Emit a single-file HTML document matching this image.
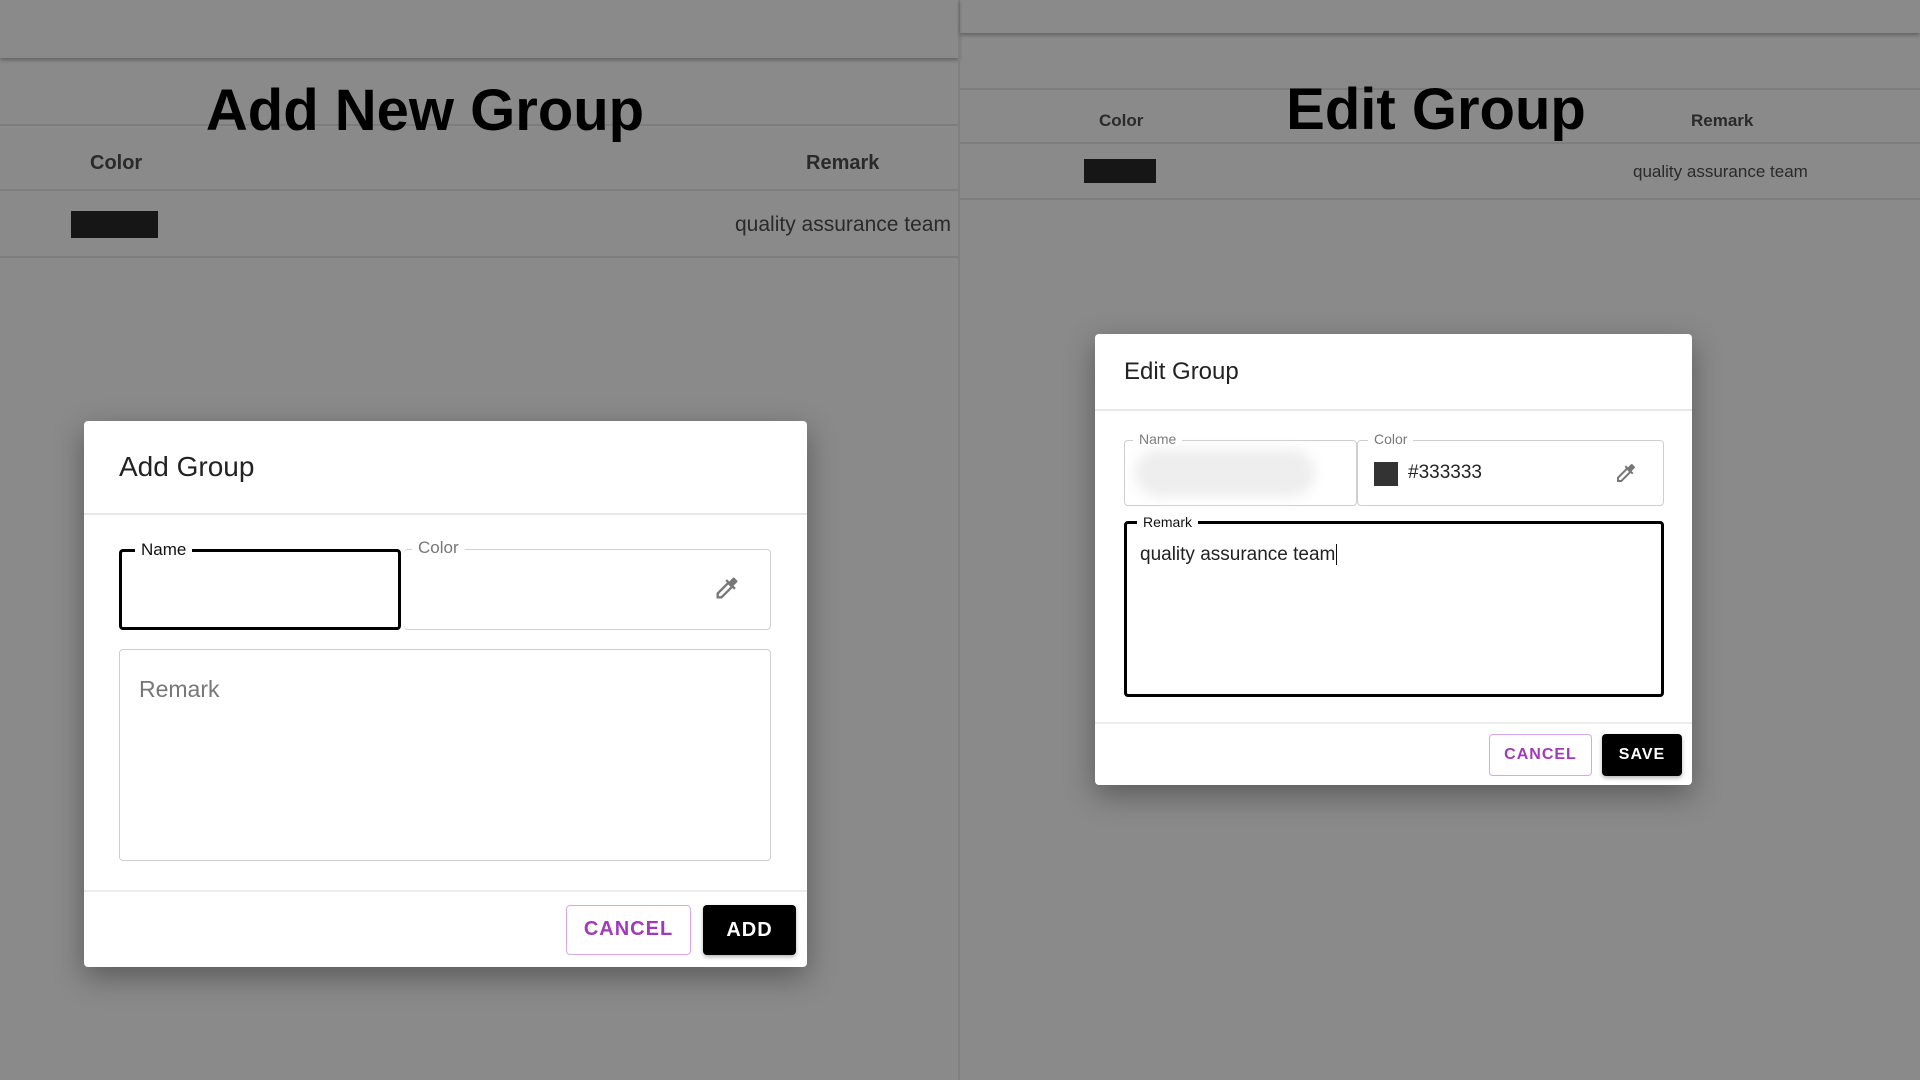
<!DOCTYPE html>
<html><head><meta charset="utf-8"><style>
*{box-sizing:border-box;margin:0;padding:0}
body{width:1920px;height:1080px;background:#8a8a8a;position:relative;overflow:hidden;font-family:"Liberation Sans",sans-serif;color:#1a1a1a}
.a{position:absolute}
.hl{position:absolute;height:2px;background:#7d7d7d}
.title{position:absolute;font-weight:bold;font-size:58px;color:#000;white-space:nowrap;transform:translateX(-50%)}
.dlg{position:absolute;background:#fff;border-radius:4px;box-shadow:0 10px 30px rgba(0,0,0,.35)}
.fld{position:absolute;border:1.5px solid #cfcfcf;border-radius:4px}
.fld.f{border:3px solid #000}
.lbl{position:absolute;background:#fff;padding:0 6px;color:#777;top:-11px;left:12px}
.btn{position:absolute;border-radius:4px;font-weight:bold;text-align:center;letter-spacing:1px}
.c{border:1.5px solid #d9a6e6;color:#a23ab8;background:#fff}
.k{background:#000;color:#fff;box-shadow:0 2px 4px rgba(0,0,0,.3)}
</style></head><body>
<!-- left panel -->
<div class="a" style="left:0;top:0;width:959px;height:58px;box-shadow:0 2px 4px rgba(0,0,0,.3)"></div>
<div class="hl" style="left:0;top:124px;width:959px"></div>
<div class="title" style="left:425px;top:77px">Add New Group</div>
<div class="a" style="left:90px;top:152px;font-size:20px;font-weight:bold;color:#2a2a2a">Color</div>
<div class="a" style="left:806px;top:152px;font-size:20px;font-weight:bold;color:#2a2a2a">Remark</div>
<div class="hl" style="left:0;top:189px;width:959px"></div>
<div class="a" style="left:71px;top:211px;width:87px;height:27px;background:#161616"></div>
<div class="a" style="left:735px;top:213px;font-size:21px;color:#2a2a2a">quality assurance team</div>
<div class="hl" style="left:0;top:256px;width:959px"></div>
<div class="a" style="left:958px;top:0;width:2px;height:1080px;background:#7f7f7f"></div>

<div class="dlg" style="left:84px;top:421px;width:723px;height:546px">
 <div class="a" style="left:35px;top:30px;font-size:28px;color:#222">Add Group</div>
 <div class="a" style="left:0;top:92px;width:723px;height:2px;background:#e8e8e8"></div>
 <div class="fld f" style="left:35px;top:128px;width:282px;height:81px"><div class="lbl" style="color:#111;font-size:17px;left:13px;top:-12px">Name</div></div>
 <div class="fld" style="left:320px;top:128px;width:367px;height:81px;border-left:none"><div class="lbl" style="font-size:17px;left:8px;top:-12px">Color</div>
  <svg class="a" style="left:309px;top:24px" width="28" height="28" viewBox="0 0 24 24"><path fill="#777" d="M20.7 5.6l-2.3-2.3a1 1 0 0 0-1.4 0l-3.1 3.1-1.9-1.9-1.4 1.4 1.4 1.4L3 16.3V21h4.7l9-9 1.4 1.4 1.4-1.4-1.9-1.9 3.1-3.1a1 1 0 0 0 0-1.4zM6.9 19H5v-1.9l8.1-8.1 1.9 1.9z"/></svg>
 </div>
 <div class="fld" style="left:35px;top:228px;width:652px;height:212px"><div class="a" style="left:19px;top:26px;font-size:23px;color:#777">Remark</div></div>
 <div class="a" style="left:0;top:469px;width:723px;height:2px;background:#ececec"></div>
 <div class="btn c" style="left:482px;top:484px;width:125px;height:50px;line-height:47px;font-size:20px">CANCEL</div>
 <div class="btn k" style="left:619px;top:484px;width:93px;height:50px;line-height:50px;font-size:20px">ADD</div>
</div>

<!-- right panel -->
<div class="a" style="left:960px;top:0;width:960px;height:33px;box-shadow:0 2px 4px rgba(0,0,0,.3)"></div>
<div class="hl" style="left:960px;top:88px;width:960px"></div>
<div class="title" style="left:1436px;top:76px">Edit Group</div>
<div class="a" style="left:1099px;top:111px;font-size:17px;font-weight:bold;color:#2a2a2a">Color</div>
<div class="a" style="left:1691px;top:111px;font-size:17px;font-weight:bold;color:#2a2a2a">Remark</div>
<div class="hl" style="left:960px;top:142px;width:960px"></div>
<div class="a" style="left:1084px;top:159px;width:72px;height:24px;background:#161616"></div>
<div class="a" style="left:1633px;top:162px;font-size:17px;color:#2a2a2a">quality assurance team</div>
<div class="hl" style="left:960px;top:198px;width:960px"></div>

<div class="dlg" style="left:1095px;top:334px;width:597px;height:451px">
 <div class="a" style="left:29px;top:24px;font-size:24px;color:#222">Edit Group</div>
 <div class="a" style="left:0;top:75px;width:597px;height:2px;background:#e8e8e8"></div>
 <div class="fld" style="left:29px;top:106px;width:233px;height:66px"><div class="lbl" style="font-size:14px;left:8px;top:-10px">Name</div>
  <div class="a" style="left:10px;top:8px;width:180px;height:48px;border-radius:24px;background:#eee;filter:blur(6px)"></div></div>
 <div class="fld" style="left:262px;top:106px;width:307px;height:66px"><div class="lbl" style="font-size:14px;left:10px;top:-10px">Color</div>
  <div class="a" style="left:16px;top:21px;width:24px;height:24px;background:#333"></div>
  <div class="a" style="left:50px;top:21px;font-size:19px;color:#222">#333333</div>
  <svg class="a" style="left:256px;top:20px" width="24" height="24" viewBox="0 0 24 24"><path fill="#777" d="M20.7 5.6l-2.3-2.3a1 1 0 0 0-1.4 0l-3.1 3.1-1.9-1.9-1.4 1.4 1.4 1.4L3 16.3V21h4.7l9-9 1.4 1.4 1.4-1.4-1.9-1.9 3.1-3.1a1 1 0 0 0 0-1.4zM6.9 19H5v-1.9l8.1-8.1 1.9 1.9z"/></svg>
 </div>
 <div class="fld f" style="left:29px;top:187px;width:540px;height:176px"><div class="lbl" style="color:#111;font-size:14px;left:10px;top:-10px">Remark</div>
  <div class="a" style="left:13px;top:20px;font-size:19px;color:#222">quality assurance team<span style="border-left:1.5px solid #111;margin-left:1px"></span></div></div>
 <div class="a" style="left:0;top:388px;width:597px;height:2px;background:#ececec"></div>
 <div class="btn c" style="left:394px;top:400px;width:103px;height:42px;line-height:39px;font-size:16px">CANCEL</div>
 <div class="btn k" style="left:507px;top:400px;width:80px;height:42px;line-height:42px;font-size:16px">SAVE</div>
</div>
</body></html>
